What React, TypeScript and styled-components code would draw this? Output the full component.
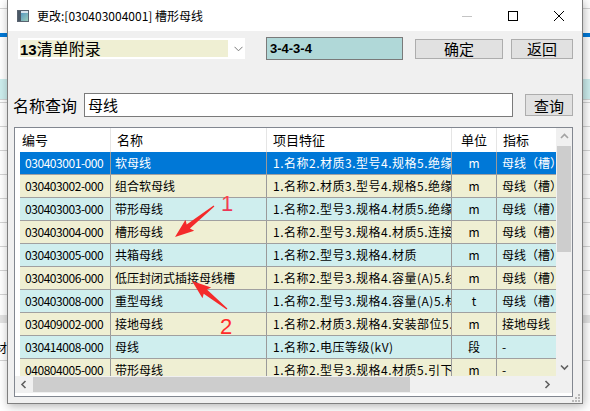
import React from 'react'
import styled, { createGlobalStyle } from 'styled-components'

const CJK = `'Noto Sans CJK SC', 'Noto Sans', sans-serif`

const GlobalStyle = createGlobalStyle`
  html, body {
    margin: 0;
    padding: 0;
    background: #fff;
  }
  body {
    font-family: ${CJK};
  }
`

const Desktop = styled.div`
  position: relative;
  width: 590px;
  height: 411px;
  overflow: hidden;
  background: #fff;
`

// the app window behind the dialog, only its edges show
const BgRow = styled.div<{ $h: number; $bg?: string; $line?: boolean }>`
  height: ${({ $h }) => $h}px;
  background: ${({ $bg }) => $bg || '#fff'};
  border-bottom: ${({ $line }) => ($line ? '1px solid #d4d4d4' : 'none')};
  font: 12px/${({ $h }) => $h}px ${CJK};
  text-indent: -5px;
  overflow: hidden;
`

const Dialog = styled.div`
  position: absolute;
  left: 7px;
  top: 0;
  width: 576px;
  height: 404px;
  box-sizing: border-box;
  border: 1px solid #7f7f7f;
  border-top: none;
  box-shadow: 1px 2px 9px rgba(0, 0, 0, 0.3);
  display: flex;
  flex-direction: column;
  background: #f0f0f0;
`

const TitleBar = styled.div`
  height: 31px;
  flex-shrink: 0;
  background: #fff;
  display: flex;
  align-items: center;
`

const TitleIcon = styled.svg`
  margin-left: 9px;
  flex-shrink: 0;
`

const TitleText = styled.div`
  flex: 1;
  margin-left: 8px;
  font: 12px ${CJK};
  color: #000;
  white-space: nowrap;
`

const CaptionButton = styled.div`
  width: 46px;
  height: 31px;
  display: flex;
  align-items: center;
  justify-content: center;
`

const Client = styled.div`
  flex: 1;
  position: relative;
  display: flex;
  flex-direction: column;
  padding-top: 6px;
`

const TopRow = styled.div`
  display: flex;
  align-items: center;
  height: 23px;
`

const Combo = styled.div`
  margin-left: 10px;
  width: 227px;
  height: 21px;
  box-sizing: border-box;
  padding: 2px;
  background: #fff;
  display: flex;
  align-items: center;
`

const ComboField = styled.div`
  width: 208px;
  height: 17px;
  background: #efefd3;
  font: 16px/17px ${CJK};
  color: #000;
  white-space: nowrap;
  overflow: hidden;

  b {
    font-family: 'Liberation Sans', sans-serif;
    font-weight: 700;
    font-size: 15px;
  }
`

const ComboArrow = styled.div`
  flex: 1;
  display: flex;
  justify-content: center;
  padding-left: 5px;
`

const CodeBox = styled.div`
  margin-left: 21px;
  width: 137px;
  height: 23px;
  box-sizing: border-box;
  border: 1px solid #7a7a7a;
  background: #b0d8d8;
  padding-left: 3px;
  font: 700 13px/21px 'Liberation Sans', sans-serif;
  color: #000;
`

const Button = styled.div<{ $w: number; $h?: number; $ml: number }>`
  margin-left: ${({ $ml }) => $ml}px;
  width: ${({ $w }) => $w}px;
  height: ${({ $h }) => $h || 20}px;
  box-sizing: border-box;
  border: 1px solid #adadad;
  background: #e1e1e1;
  display: flex;
  align-items: center;
  justify-content: center;
  font: 15px ${CJK};
  color: #000;
`

const SearchRow = styled.div`
  margin-top: 33px;
  display: flex;
  align-items: center;
  height: 24px;
`

const SearchLabel = styled.div`
  margin-left: 5px;
  width: 71px;
  font: 16px ${CJK};
  color: #000;
  white-space: nowrap;
`

const SearchInput = styled.div`
  width: 429px;
  height: 24px;
  box-sizing: border-box;
  border: 1px solid #7a7a7a;
  background: #fff;
  padding-left: 3px;
  font: 15px/22px ${CJK};
  color: #000;
`

const ListBox = styled.div`
  margin-top: 10px;
  margin-left: 6px;
  width: 559px;
  height: 270px;
  box-sizing: border-box;
  border: 1px solid #828790;
  background: #fff;
  padding-bottom: 3px;
  display: grid;
  grid-template-columns: 541px 16px;
  grid-template-rows: 248px 17px;
`

const Viewport = styled.div`
  padding-left: 5px;
  overflow: hidden;
`

const HeaderRow = styled.div`
  display: flex;
  height: 24px;
  background: #fff;
`

const HeaderCell = styled.div<{ $w: number; $pad: number; $center?: boolean }>`
  flex: 0 0 ${({ $w }) => $w}px;
  box-sizing: border-box;
  border-right: 1px solid #e5e5e5;
  padding-left: ${({ $pad }) => $pad}px;
  text-align: ${({ $center }) => ($center ? 'center' : 'left')};
  font: 13px/24px ${CJK};
  color: #000;
  white-space: nowrap;
  overflow: hidden;
`

const Row = styled.div<{ $bg: string; $fg: string }>`
  display: flex;
  height: 23px;
  box-sizing: border-box;
  border-bottom: 1px solid #a0a0a0;
  background: ${({ $bg }) => $bg};
  color: ${({ $fg }) => $fg};
`

const Cell = styled.div<{ $w: number; $pad: number; $center?: boolean; $spacing?: number }>`
  flex: 0 0 ${({ $w }) => $w}px;
  box-sizing: border-box;
  border-right: 1px solid #9a9a9a;
  padding-left: ${({ $pad }) => $pad}px;
  text-align: ${({ $center }) => ($center ? 'center' : 'left')};
  font: 12px/22px ${CJK};
  letter-spacing: ${({ $spacing }) => $spacing || 0}px;
  white-space: nowrap;
  overflow: hidden;
`

const VScroll = styled.div`
  background: #f0f0f0;
  display: flex;
  flex-direction: column;
`

const HScroll = styled.div`
  background: #f0f0f0;
  display: flex;
`

const ScrollArrow = styled.div<{ $w: number; $h: number }>`
  flex: 0 0 auto;
  width: ${({ $w }) => $w}px;
  height: ${({ $h }) => $h}px;
  display: flex;
  align-items: center;
  justify-content: center;
`

const VThumb = styled.div`
  margin: 1px 1px 0;
  height: 106px;
  background: #cdcdcd;
`

const HThumb = styled.div`
  margin-top: 1px;
  width: 377px;
  height: 15px;
  background: #cdcdcd;
`

const Fill = styled.div`
  flex: 1;
`

const Corner = styled.div`
  background: #f0f0f0;
`

const Grip = styled.svg`
  position: absolute;
  right: 2px;
  bottom: 1px;
`

const Overlay = styled.svg`
  position: absolute;
  left: 0;
  top: 0;
  pointer-events: none;
`

const COLS = [91, 156, 185, 45, 100]

type Item = { code: string; name: string; feat: string; unit: string; idx: string }

const items: Item[] = [
  { code: '030403001-000', name: '软母线', feat: '1.名称2.材质3.型号4.规格5.绝缘子类型', unit: 'm', idx: '母线（槽）' },
  { code: '030403002-000', name: '组合软母线', feat: '1.名称2.材质3.型号4.规格5.绝缘子', unit: 'm', idx: '母线（槽）' },
  { code: '030403003-000', name: '带形母线', feat: '1.名称2.型号3.规格4.材质5.绝缘子', unit: 'm', idx: '母线（槽）' },
  { code: '030403004-000', name: '槽形母线', feat: '1.名称2.型号3.规格4.材质5.连接设备', unit: 'm', idx: '母线（槽）' },
  { code: '030403005-000', name: '共箱母线', feat: '1.名称2.型号3.规格4.材质', unit: 'm', idx: '母线（槽）' },
  { code: '030403006-000', name: '低压封闭式插接母线槽', feat: '1.名称2.型号3.规格4.容量(A)5.线制', unit: 'm', idx: '母线（槽）' },
  { code: '030403008-000', name: '重型母线', feat: '1.名称2.型号3.规格4.容量(A)5.材质', unit: 't', idx: '母线（槽）' },
  { code: '030409002-000', name: '接地母线', feat: '1.名称2.材质3.规格4.安装部位5.安装形式', unit: 'm', idx: '接地母线' },
  { code: '030414008-000', name: '母线', feat: '1.名称2.电压等级(kV)', unit: '段', idx: '-' },
  { code: '040804005-000', name: '带形母线', feat: '1.名称2.型号3.规格4.材质5.引下线', unit: 'm', idx: '-' },
]

const bgRows = [
  { h: 8, line: true },
  { h: 24 },
  { h: 4, bg: '#0078d7' },
  { h: 42 },
  { h: 20, bg: '#cdeeee', line: true },
  { h: 2, line: true },
  ...Array.from({ length: 8 }, () => ({ h: 23, line: true })),
  { h: 20 },
  { h: 8, bg: '#e3e3e3' },
  { h: 19 },
  { h: 12, text: '材' },
  { h: 6, line: true },
  { h: 60 },
] as { h: number; bg?: string; line?: boolean; text?: string }[]

// tapered arrow, thin at the tail, barbed head at the tip
function arrow(tx: number, ty: number, hx: number, hy: number) {
  const dx = hx - tx
  const dy = hy - ty
  const len = Math.hypot(dx, dy)
  const ux = dx / len
  const uy = dy / len
  const nx = -uy
  const ny = ux
  const headLen = 17
  const bx = hx - ux * headLen
  const by = hy - uy * headLen
  const wing = (w: number, back: number) => [bx + nx * w - ux * back, by + ny * w - uy * back]
  const pts = [
    [tx + nx * 0.6, ty + ny * 0.6],
    [bx + nx * 2.6, by + ny * 2.6],
    wing(7, 2),
    [hx, hy],
    wing(-7, 2),
    [bx - nx * 2.6, by - ny * 2.6],
    [tx - nx * 0.6, ty - ny * 0.6],
  ]
  return pts.map(p => `${p[0].toFixed(1)},${p[1].toFixed(1)}`).join(' ')
}

function Chevron({ dir, color }: { dir: 'up' | 'down' | 'left' | 'right'; color: string }) {
  const d = {
    up: 'M1 5 L4.5 1.5 L8 5',
    down: 'M1 1.5 L4.5 5 L8 1.5',
    left: 'M5.5 1 L2 4.5 L5.5 8',
    right: 'M2.5 1 L6 4.5 L2.5 8',
  }[dir]
  const vertical = dir === 'up' || dir === 'down'
  return (
    <svg width={vertical ? 9 : 8} height={vertical ? 7 : 9}>
      <path d={d} fill="none" stroke={color} strokeWidth="1.6" />
    </svg>
  )
}

export default function App() {
  return (
    <Desktop>
      <GlobalStyle />
      {bgRows.map((r, i) => (
        <BgRow key={i} $h={r.h} $bg={r.bg} $line={r.line}>
          {r.text}
        </BgRow>
      ))}

      <Dialog>
        <TitleBar>
          <TitleIcon width="12" height="12" viewBox="0 0 12 12">
            <defs>
              <linearGradient id="ico" x1="0" y1="0" x2="1" y2="1">
                <stop offset="0" stopColor="#3f86c4" />
                <stop offset="1" stopColor="#9fcfb8" />
              </linearGradient>
            </defs>
            <rect x="0.5" y="0.5" width="11" height="11" fill="url(#ico)" stroke="#5a6470" />
            <rect x="1" y="1" width="3" height="10" fill="#4a5866" />
            <rect x="4" y="1" width="7" height="2" fill="#d8e4ee" />
          </TitleIcon>
          <TitleText>更改:[030403004001] 槽形母线</TitleText>
          <CaptionButton>
            <svg width="10" height="10">
              <path d="M0 5.5 H10" stroke="#c4c4c4" strokeWidth="1" />
            </svg>
          </CaptionButton>
          <CaptionButton>
            <svg width="10" height="10">
              <rect x="0.5" y="0.5" width="9" height="9" fill="none" stroke="#000" strokeWidth="1" />
            </svg>
          </CaptionButton>
          <CaptionButton>
            <svg width="10" height="10">
              <path d="M0 0 L10 10 M10 0 L0 10" stroke="#000" strokeWidth="1" />
            </svg>
          </CaptionButton>
        </TitleBar>

        <Client>
          <TopRow>
            <Combo>
              <ComboField>
                <b>13</b>清单附录
              </ComboField>
              <ComboArrow>
                <svg width="9" height="6">
                  <path d="M0.5 0.8 L4.5 4.8 L8.5 0.8" fill="none" stroke="#7a7a7a" strokeWidth="1" />
                </svg>
              </ComboArrow>
            </Combo>
            <CodeBox>3-4-3-4</CodeBox>
            <Button $w={88} $ml={12}>确定</Button>
            <Button $w={62} $ml={8}>返回</Button>
          </TopRow>

          <SearchRow>
            <SearchLabel>名称查询</SearchLabel>
            <SearchInput>母线</SearchInput>
            <Button $w={48} $h={22} $ml={12}>查询</Button>
          </SearchRow>

          <ListBox>
            <Viewport>
              <HeaderRow>
                <HeaderCell $w={COLS[0]} $pad={2}>编号</HeaderCell>
                <HeaderCell $w={COLS[1]} $pad={6}>名称</HeaderCell>
                <HeaderCell $w={COLS[2]} $pad={6}>项目特征</HeaderCell>
                <HeaderCell $w={COLS[3]} $pad={0} $center>单位</HeaderCell>
                <HeaderCell $w={COLS[4]} $pad={6}>指标</HeaderCell>
              </HeaderRow>
              {items.map((it, i) => {
                const selected = i === 0
                const bg = selected ? '#0078d7' : i % 2 === 0 ? '#cfeeee' : '#efefd3'
                return (
                  <Row key={it.code} $bg={bg} $fg={selected ? '#fff' : '#000'}>
                    <Cell $w={COLS[0]} $pad={5} $spacing={-0.45}>{it.code}</Cell>
                    <Cell $w={COLS[1]} $pad={4}>{it.name}</Cell>
                    <Cell $w={COLS[2]} $pad={6} $spacing={0.5}>{it.feat}</Cell>
                    <Cell $w={COLS[3]} $pad={0} $center>{it.unit}</Cell>
                    <Cell $w={COLS[4]} $pad={5}>{it.idx}</Cell>
                  </Row>
                )
              })}
            </Viewport>

            <VScroll>
              <ScrollArrow $w={16} $h={17}>
                <Chevron dir="up" color="#a3a3a3" />
              </ScrollArrow>
              <VThumb />
              <Fill />
              <ScrollArrow $w={16} $h={17}>
                <Chevron dir="down" color="#606060" />
              </ScrollArrow>
            </VScroll>

            <HScroll>
              <ScrollArrow $w={18} $h={17}>
                <Chevron dir="left" color="#606060" />
              </ScrollArrow>
              <HThumb />
              <Fill />
              <ScrollArrow $w={18} $h={17}>
                <Chevron dir="right" color="#606060" />
              </ScrollArrow>
            </HScroll>
            <Corner />
          </ListBox>

          <Grip width="8" height="8">
            {[
              [6, 0],
              [6, 3],
              [3, 3],
              [6, 6],
              [3, 6],
              [0, 6],
            ].map(([x, y]) => (
              <rect key={`${x}-${y}`} x={x} y={y} width="2" height="2" fill="#b8b8b8" />
            ))}
          </Grip>
        </Client>
      </Dialog>

      {/* red annotations drawn on top of the screenshot */}
      <Overlay width="590" height="411" viewBox="0 0 590 411">
        <defs>
          <linearGradient id="red" x1="0" y1="0" x2="0" y2="1">
            <stop offset="0" stopColor="#ff4a4a" />
            <stop offset="1" stopColor="#e8305a" />
          </linearGradient>
        </defs>
        <polygon points={arrow(214, 206, 175, 237)} fill="#f42a2a" />
        <polygon points={arrow(227, 309, 192, 281)} fill="#f42a2a" />
        <text x="221" y="211" fontFamily="Liberation Sans, sans-serif" fontSize="22" fill="url(#red)">1</text>
        <text x="220" y="334" fontFamily="Liberation Sans, sans-serif" fontSize="22" fill="#ff2a2a">2</text>
      </Overlay>
    </Desktop>
  )
}
